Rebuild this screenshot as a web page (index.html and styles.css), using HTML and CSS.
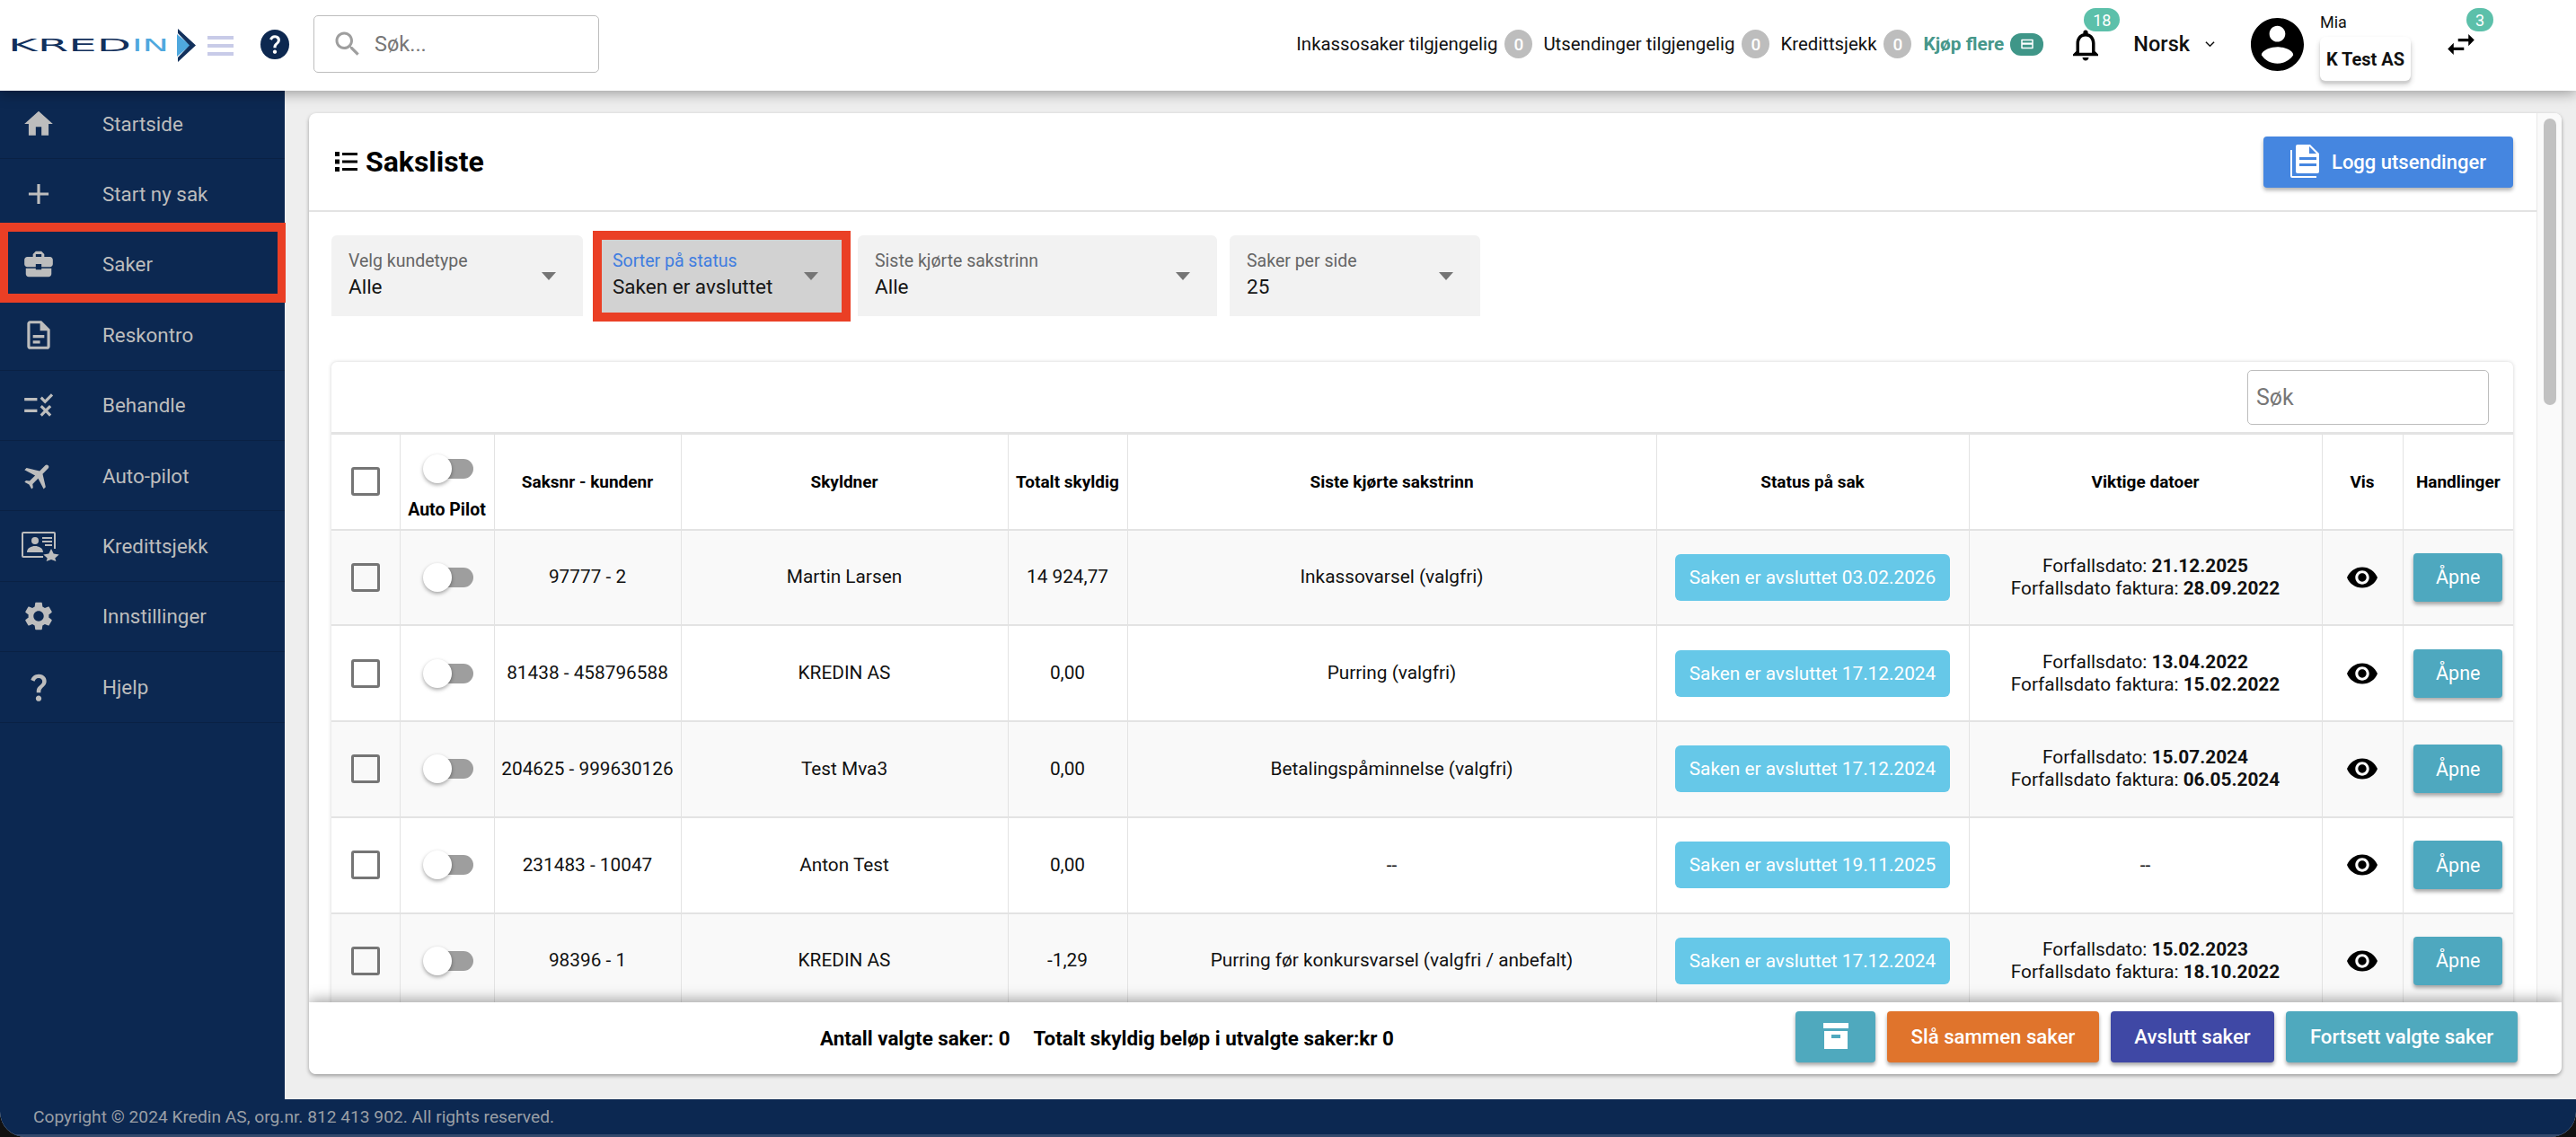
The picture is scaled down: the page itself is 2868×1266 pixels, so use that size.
FILE: index.html
```html
<!DOCTYPE html>
<html lang="no">
<head>
<meta charset="utf-8">
<title>Saksliste</title>
<link rel="stylesheet" href="styles.css">
</head>
<body>
<div class="app">
  <header class="topbar">
    <div class="brand">
      <svg class="logo" viewBox="0 0 206 37" aria-label="Kredin">
        <text x="-3" y="25" class="logo-a" textLength="137" lengthAdjust="spacingAndGlyphs">KRED</text>
        <text x="135" y="25" class="logo-b" textLength="41" lengthAdjust="spacingAndGlyphs">IN</text>
        <path fill="#4fa8de" d="M185 6l15 12.500-15 12.500z"/>
        <path fill="#12305c" d="M186 0l20 18.500-20 18.500v-5l13-13.500-13-13.500z"/>
      </svg>
      <div class="burger"><i></i><i></i><i></i></div>
      <div class="help-dot">
        <svg viewBox="0 0 24 24"><path fill="#fff" d="M11.07 12.85c.77-1.39 2.25-2.21 3.11-3.44.91-1.29.4-3.7-2.18-3.7-1.69 0-2.52 1.28-2.87 2.34L6.54 6.96C7.25 4.83 9.18 3 11.99 3c2.35 0 3.96 1.07 4.78 2.41.7 1.15 1.11 3.3.03 4.9-1.2 1.77-2.35 2.31-2.97 3.45-.25.46-.35.76-.35 2.24h-2.89c-.01-.78-.13-2.05.48-3.15zM14 20c0 1.1-.9 2-2 2s-2-.9-2-2 .9-2 2-2 2 .9 2 2z"/></svg>
      </div>
      <div class="top-search">
        <svg viewBox="0 0 24 24"><path fill="#9e9e9e" d="M15.5 14h-.79l-.28-.27C15.41 12.59 16 11.11 16 9.5 16 5.91 13.09 3 9.5 3S3 5.91 3 9.5 5.91 16 9.5 16c1.61 0 3.09-.59 4.23-1.57l.27.28v.79l5 4.99L20.49 19l-4.99-5zm-6 0C7.01 14 5 11.99 5 9.5S7.01 5 9.5 5 14 7.01 14 9.5 11.99 14 9.5 14z"/></svg>
        <span>Søk...</span>
      </div>
    </div>
    <div class="top-right">
      <span class="quota">Inkassosaker tilgjengelig</span><span class="zero">0</span>
      <span class="quota q2">Utsendinger tilgjengelig</span><span class="zero">0</span>
      <span class="quota q2">Kredittsjekk</span><span class="zero">0</span>
      <span class="buy">Kjøp flere</span>
      <span class="buy-pill"><svg viewBox="0 0 24 24"><path fill="#fff" d="M4 5h16a1 1 0 0 1 1 1v12a1 1 0 0 1-1 1H4a1 1 0 0 1-1-1V6a1 1 0 0 1 1-1zm1 2v3h14V7zm0 6v4h14v-4z"/></svg></span>
      <div class="bell">
        <svg viewBox="0 0 24 24"><path d="M12 22c1.1 0 2-.9 2-2h-4c0 1.1.9 2 2 2zm6-6v-5c0-3.07-1.63-5.64-4.5-6.32V4c0-.83-.67-1.5-1.5-1.5s-1.5.67-1.5 1.5v.68C7.64 5.36 6 7.92 6 11v5l-2 2v1h16v-1l-2-2zm-2 1H8v-6c0-2.48 1.51-4.5 4-4.5s4 2.02 4 4.5v6z"/></svg>
        <span class="pip pip-wide">18</span>
      </div>
      <div class="lang">Norsk<svg viewBox="0 0 12 8"><path fill="none" stroke="#111" stroke-width="1.6" d="M1 1.5l5 5 5-5"/></svg></div>
      <svg class="avatar" viewBox="2 2 20 20"><path d="M12 2C6.48 2 2 6.48 2 12s4.48 10 10 10 10-4.48 10-10S17.52 2 12 2zm0 3c1.66 0 3 1.34 3 3s-1.34 3-3 3-3-1.34-3-3 1.34-3 3-3zm0 14.2c-2.5 0-4.71-1.28-6-3.22.03-1.99 4-3.08 6-3.08 1.99 0 5.97 1.09 6 3.08-1.29 1.94-3.5 3.22-6 3.22z"/></svg>
      <div class="who">
        <span class="who-name">Mia</span>
        <span class="who-co">K Test AS</span>
      </div>
      <div class="swap">
        <svg viewBox="3 5 18 14"><path d="M6.99 11L3 15l3.99 4v-3H14v-2H6.99v-3zM21 9l-3.99-4v3H10v2h7.01v3L21 9z"/></svg>
        <span class="pip pip-narrow">3</span>
      </div>
    </div>
  </header>

  <div class="middle">
    <nav class="sidebar">
      <a class="nav-item"><svg viewBox="0 0 24 24"><path d="M10 20v-6h4v6h5v-8h3L12 3 2 12h3v8z"/></svg><span>Startside</span></a>
      <a class="nav-item"><svg viewBox="0 0 24 24"><path d="M19 13h-6v6h-2v-6H5v-2h6V5h2v6h6v2z"/></svg><span>Start ny sak</span></a>
      <a class="nav-item nav-marked"><svg viewBox="0 0 24 24"><path d="M10 16v-1H3.01L3 19c0 1.11.89 2 2 2h14c1.11 0 2-.89 2-2v-4h-7v1h-4zm10-9h-4.01V5l-2-2h-4l-2 2v2H4c-1.1 0-2 .9-2 2v3c0 1.11.89 2 2 2h6v-2h4v2h6c1.1 0 2-.9 2-2V9c0-1.1-.9-2-2-2zm-6 0h-4V5h4v2z"/></svg><span>Saker</span></a>
      <a class="nav-item"><svg viewBox="0 0 24 24"><path d="M8 16h5v2H8zm0-4h8v2H8zm6-10H6c-1.1 0-2 .9-2 2v16c0 1.1.89 2 1.99 2H18c1.1 0 2-.9 2-2V8l-6-6zm4 18H6V4h7v5h5v11z"/></svg><span>Reskontro</span></a>
      <a class="nav-item"><svg viewBox="0 0 24 24"><path d="M16.54 11L13 7.46l1.41-1.41 2.12 2.12 4.24-4.24 1.41 1.41L16.54 11zM11 7H2v2h9V7zm10 6.41L19.59 12 17 14.59 14.41 12 13 13.41 15.59 16 13 18.59 14.41 20 17 17.41 19.59 20 21 18.59 18.41 16 21 13.41zM11 15H2v2h9v-2z"/></svg><span>Behandle</span></a>
      <a class="nav-item"><svg viewBox="0 0 24 24"><path transform="rotate(45 12 12)" d="M21 16v-2l-8-5V3.5c0-.83-.67-1.5-1.5-1.5S10 2.67 10 3.5V9l-8 5v2l8-2.5V19l-2 1.5V22l3.5-1 3.5 1v-1.5L13 19v-5.5l8 2.5z"/></svg><span>Auto-pilot</span></a>
      <a class="nav-item"><svg class="nav-wide" viewBox="0 0 42 34"><path fill-rule="evenodd" d="M2 1h34a2 2 0 0 1 2 2v17h-2V3H2v25h22v2H2a2 2 0 0 1-2-2V3a2 2 0 0 1 2-2z"/><circle cx="15" cy="11" r="4"/><path d="M6 24c0-5 5-7 9-7s9 2 9 7zM23 7h11v2H23zM23 11h11v2H23zM26 15h8v2h-8zM33 20l2.700 5.600 6 .8-4.400 4.200 1.100 3.400-5.400-2-5.400 2 1.100-3.400-4.400-4.200 6-.8z"/></svg><span>Kredittsjekk</span></a>
      <a class="nav-item"><svg viewBox="0 0 24 24"><path d="M19.14,12.94c0.04-0.3,0.06-0.61,0.06-0.94c0-0.32-0.02-0.64-0.07-0.94l2.03-1.58c0.18-0.14,0.23-0.41,0.12-0.61 l-1.92-3.32c-0.12-0.22-0.37-0.29-0.59-0.22l-2.39,0.96c-0.5-0.38-1.03-0.7-1.62-0.94L14.4,2.81c-0.04-0.24-0.24-0.41-0.48-0.41 h-3.84c-0.24,0-0.43,0.17-0.47,0.41L9.25,5.35C8.66,5.59,8.12,5.92,7.63,6.29L5.24,5.33c-0.22-0.08-0.47,0-0.59,0.22L2.74,8.87 C2.62,9.08,2.66,9.34,2.86,9.48l2.03,1.58C4.84,11.36,4.8,11.69,4.8,12s0.02,0.64,0.07,0.94l-2.03,1.58 c-0.18,0.14-0.23,0.41-0.12,0.61l1.92,3.32c0.12,0.22,0.37,0.29,0.59,0.22l2.39-0.96c0.5,0.38,1.03,0.7,1.62,0.94l0.36,2.54 c0.05,0.24,0.24,0.41,0.48,0.41h3.84c0.24,0,0.44-0.17,0.47-0.41l0.36-2.54c0.59-0.24,1.13-0.56,1.62-0.94l2.39,0.96 c0.22,0.08,0.47,0,0.59-0.22l1.92-3.32c0.12-0.22,0.07-0.47-0.12-0.61L19.14,12.94z M12,15.6c-1.98,0-3.6-1.62-3.6-3.6 s1.62-3.6,3.6-3.6s3.6,1.62,3.6,3.6S13.98,15.6,12,15.6z"/></svg><span>Innstillinger</span></a>
      <a class="nav-item"><svg viewBox="0 0 24 24"><path d="M11.07 12.85c.77-1.39 2.25-2.21 3.11-3.44.91-1.29.4-3.7-2.18-3.7-1.69 0-2.52 1.28-2.87 2.34L6.54 6.96C7.25 4.83 9.18 3 11.99 3c2.35 0 3.96 1.07 4.78 2.41.7 1.15 1.11 3.3.03 4.9-1.2 1.77-2.35 2.31-2.97 3.45-.25.46-.35.76-.35 2.24h-2.89c-.01-.78-.13-2.05.48-3.15zM14 20c0 1.1-.9 2-2 2s-2-.9-2-2 .9-2 2-2 2 .9 2 2z"/></svg><span>Hjelp</span></a>
    </nav>

    <main class="content">
      <section class="card">
        <div class="card-body">
          <div class="scroll-pane">
            <div class="title-row">
              <h1 class="page-title">
                <svg viewBox="0 0 25 24"><path d="M0 1h5v5H0zM8 2h17v3H8zM0 9.500h5v5H0zM8 10.500h17v3H8zM0 18h5v5H0zM8 19h17v3H8z"/></svg>
                Saksliste
              </h1>
              <button class="log-btn">
                <svg viewBox="0 0 32 38"><path fill="#fff" d="M0 6h2v29h27v2H2a2 2 0 0 1-2-2zM8 0h14l10 10v20a2 2 0 0 1-2 2H8a2 2 0 0 1-2-2V2a2 2 0 0 1 2-2z"/><path fill="#4586e0" d="M21 2v8h8zM10 14h19v3H10zM10 21h19v3H10z"/></svg>
                Logg utsendinger
              </button>
            </div>
            <div class="filters">
              <div class="select s-a"><span class="sel-label">Velg kundetype</span><span class="sel-value">Alle</span><i class="caret"></i></div>
              <div class="select s-b sel-on"><span class="sel-label">Sorter på status</span><span class="sel-value">Saken er avsluttet</span><i class="caret"></i></div>
              <div class="select s-c"><span class="sel-label">Siste kjørte sakstrinn</span><span class="sel-value">Alle</span><i class="caret"></i></div>
              <div class="select s-d"><span class="sel-label">Saker per side</span><span class="sel-value">25</span><i class="caret"></i></div>
            </div>
            <div class="table-card">
              <div class="table-tools"><div class="tbl-search">Søk</div></div>
              <table class="cases">
                <colgroup>
                  <col class="c1"><col class="c2"><col class="c3"><col class="c4"><col class="c5"><col class="c6"><col class="c7"><col class="c8"><col class="c9"><col class="c10">
                </colgroup>
                <thead>
                  <tr>
                    <th><i class="check"></i></th>
                    <th class="ap-head"><i class="toggle"></i><span class="ap-label">Auto Pilot</span></th>
                    <th>Saksnr - kundenr</th>
                    <th>Skyldner</th>
                    <th>Totalt skyldig</th>
                    <th>Siste kjørte sakstrinn</th>
                    <th>Status på sak</th>
                    <th>Viktige datoer</th>
                    <th>Vis</th>
                    <th>Handlinger</th>
                  </tr>
                </thead>
                <tbody>
                  <tr>
                    <td><i class="check"></i></td><td><i class="toggle"></i></td>
                    <td>97777 - 2</td><td>Martin Larsen</td><td>14 924,77</td><td>Inkassovarsel (valgfri)</td>
                    <td><span class="status">Saken er avsluttet 03.02.2026</span></td>
                    <td>Forfallsdato: <b>21.12.2025</b><br>Forfallsdato faktura: <b>28.09.2022</b></td>
                    <td><svg class="eye" viewBox="1 4.500 22 15"><path d="M12 4.500C7 4.500 2.730 7.610 1 12c1.730 4.390 6 7.500 11 7.500s9.270-3.110 11-7.500c-1.730-4.390-6-7.500-11-7.500zM12 17c-2.760 0-5-2.240-5-5s2.240-5 5-5 5 2.240 5 5-2.240 5-5 5zm0-8c-1.660 0-3 1.340-3 3s1.340 3 3 3 3-1.340 3-3-1.340-3-3-3z"/></svg></td>
                    <td><button class="open">Åpne</button></td>
                  </tr>
                  <tr>
                    <td><i class="check"></i></td><td><i class="toggle"></i></td>
                    <td>81438 - 458796588</td><td>KREDIN AS</td><td>0,00</td><td>Purring (valgfri)</td>
                    <td><span class="status">Saken er avsluttet 17.12.2024</span></td>
                    <td>Forfallsdato: <b>13.04.2022</b><br>Forfallsdato faktura: <b>15.02.2022</b></td>
                    <td><svg class="eye" viewBox="1 4.500 22 15"><path d="M12 4.500C7 4.500 2.730 7.610 1 12c1.730 4.390 6 7.500 11 7.500s9.270-3.110 11-7.500c-1.730-4.390-6-7.500-11-7.500zM12 17c-2.760 0-5-2.240-5-5s2.240-5 5-5 5 2.240 5 5-2.240 5-5 5zm0-8c-1.660 0-3 1.340-3 3s1.340 3 3 3 3-1.340 3-3-1.340-3-3-3z"/></svg></td>
                    <td><button class="open">Åpne</button></td>
                  </tr>
                  <tr>
                    <td><i class="check"></i></td><td><i class="toggle"></i></td>
                    <td>204625 - 999630126</td><td>Test Mva3</td><td>0,00</td><td>Betalingspåminnelse (valgfri)</td>
                    <td><span class="status">Saken er avsluttet 17.12.2024</span></td>
                    <td>Forfallsdato: <b>15.07.2024</b><br>Forfallsdato faktura: <b>06.05.2024</b></td>
                    <td><svg class="eye" viewBox="1 4.500 22 15"><path d="M12 4.500C7 4.500 2.730 7.610 1 12c1.730 4.390 6 7.500 11 7.500s9.270-3.110 11-7.500c-1.730-4.390-6-7.500-11-7.500zM12 17c-2.760 0-5-2.240-5-5s2.240-5 5-5 5 2.240 5 5-2.240 5-5 5zm0-8c-1.660 0-3 1.340-3 3s1.340 3 3 3 3-1.340 3-3-1.340-3-3-3z"/></svg></td>
                    <td><button class="open">Åpne</button></td>
                  </tr>
                  <tr>
                    <td><i class="check"></i></td><td><i class="toggle"></i></td>
                    <td>231483 - 10047</td><td>Anton Test</td><td>0,00</td><td>--</td>
                    <td><span class="status">Saken er avsluttet 19.11.2025</span></td>
                    <td>--</td>
                    <td><svg class="eye" viewBox="1 4.500 22 15"><path d="M12 4.500C7 4.500 2.730 7.610 1 12c1.730 4.390 6 7.500 11 7.500s9.270-3.110 11-7.500c-1.730-4.390-6-7.500-11-7.500zM12 17c-2.760 0-5-2.240-5-5s2.240-5 5-5 5 2.240 5 5-2.240 5-5 5zm0-8c-1.660 0-3 1.340-3 3s1.340 3 3 3 3-1.340 3-3-1.340-3-3-3z"/></svg></td>
                    <td><button class="open">Åpne</button></td>
                  </tr>
                  <tr>
                    <td><i class="check"></i></td><td><i class="toggle"></i></td>
                    <td>98396 - 1</td><td>KREDIN AS</td><td>-1,29</td><td>Purring før konkursvarsel (valgfri / anbefalt)</td>
                    <td><span class="status">Saken er avsluttet 17.12.2024</span></td>
                    <td>Forfallsdato: <b>15.02.2023</b><br>Forfallsdato faktura: <b>18.10.2022</b></td>
                    <td><svg class="eye" viewBox="1 4.500 22 15"><path d="M12 4.500C7 4.500 2.730 7.610 1 12c1.730 4.390 6 7.500 11 7.500s9.270-3.110 11-7.500c-1.730-4.390-6-7.500-11-7.500zM12 17c-2.760 0-5-2.240-5-5s2.240-5 5-5 5 2.240 5 5-2.240 5-5 5zm0-8c-1.660 0-3 1.340-3 3s1.340 3 3 3 3-1.340 3-3-1.340-3-3-3z"/></svg></td>
                    <td><button class="open">Åpne</button></td>
                  </tr>
                </tbody>
              </table>
            </div>
          </div>
          <div class="scrollbar"><i></i></div>
        </div>
        <div class="action-bar">
          <div class="totals"><span>Antall valgte saker: 0</span><span>Totalt skyldig beløp i utvalgte saker:kr 0</span></div>
          <div class="actions">
            <button class="act act-archive"><svg viewBox="0 0 28 30"><path fill="#fff" fill-rule="evenodd" d="M0 0h28v6H0zM1 9h26v20H1zM9 13v4h10v-4z"/></svg></button>
            <button class="act act-merge">Slå sammen saker</button>
            <button class="act act-end">Avslutt saker</button>
            <button class="act act-go">Fortsett valgte saker</button>
          </div>
        </div>
      </section>
    </main>
  </div>

  <footer class="copyright">Copyright © 2024 Kredin AS, org.nr. 812 413 902. All rights reserved.</footer>
</div>
</body>
</html>
```
FILE: styles.css
```css
*, *::before, *::after { box-sizing: border-box; }
html, body { margin: 0; height: 100%; background: #111; }
body { font-family: Roboto, "Liberation Sans", sans-serif; overflow: hidden; color: #111; }
button { font-family: inherit; border: 0; cursor: pointer; }

.app { width: 2868px; height: 1266px; display: flex; flex-direction: column; background: #eee; overflow: hidden; border-radius: 0 0 28px 28px; }

/* top bar */
.topbar { height: 101px; flex: none; background: #fff; display: flex; justify-content: space-between; position: relative; z-index: 3; box-shadow: 0 3px 14px rgba(0,0,0,.35); }
.brand { display: flex; align-items: center; padding-left: 12px; }
.logo { width: 206px; height: 37px; margin-top: -1px; overflow: visible; }
.logo-a, .logo-b { font-family: "DejaVu Sans", sans-serif; font-size: 20px; font-weight: 400; }
.logo-a { fill: #12305c; }
.logo-b { fill: #4fa8de; }
.burger { width: 29px; margin-left: 13px; display: flex; flex-direction: column; gap: 5px; }
.burger i { display: block; height: 4px; background: #c8cbe8; }
.help-dot { width: 32px; height: 33px; margin-left: 30px; margin-bottom: 3px; border-radius: 50%; background: #0d2850; display: flex; align-items: center; justify-content: center; }
.help-dot svg { width: 26px; height: 26px; }
.top-search { width: 318px; height: 64px; margin-left: 27px; margin-bottom: 3px; border: 1px solid #bdbdbd; border-radius: 5px; display: flex; align-items: center; padding-left: 19px; gap: 12px; font-size: 23.500px; color: #777; }
.top-search svg { width: 36px; height: 36px; }

.top-right { display: flex; align-items: center; position: relative; padding: 0 113px 3px 0; }
.quota { font-size: 20.400px; color: #111; margin-right: 8px; }
.q2 { margin-left: 12px; }
.zero { width: 31px; height: 32px; border-radius: 50%; background: #bdbdbd; color: #fff; font-size: 19px; font-weight: 500; display: flex; align-items: center; justify-content: center; }
.buy { margin-left: 13px; font-size: 20.800px; font-weight: 700; color: #46978a; }
.buy-pill { width: 37px; height: 25px; margin-left: 7px; border-radius: 12px; background: #3f9688; display: flex; align-items: center; justify-content: center; }
.buy-pill svg { width: 22px; height: 18px; }
.bell { width: 38px; height: 44px; margin: 4px 0 0 28px; position: relative; }
.bell svg { width: 42px; height: 42px; margin-left: -2px; display: block; }
.pip { position: absolute; background: #5cc0aa; color: #fff; font-size: 18px; display: flex; align-items: center; justify-content: center; border-radius: 13px; height: 26px; }
.pip-wide { width: 40px; left: 17px; top: -20px; }
.pip-narrow { width: 30px; left: 21px; top: -29px; }
.lang { margin-left: 34px; font-size: 23.500px; font-weight: 500; display: flex; align-items: center; gap: 17px; }
.lang svg { width: 11px; height: 8px; }
.avatar { width: 59px; height: 59px; margin-left: 40px; }
.who { margin-left: 18px; width: 101px; display: flex; flex-direction: column; align-self: flex-start; padding-top: 15px; }
.who-name { font-size: 18px; height: 26px; line-height: 20px; }
.who-co { height: 49px; background: #fff; border-radius: 6px; box-shadow: 0 3px 2px #cfcfcf, 0 4px 6px rgba(0,0,0,.2); font-size: 20px; font-weight: 700; display: flex; align-items: center; justify-content: center; }
.swap { width: 30px; height: 22px; margin-left: 41px; position: relative; }
.swap svg { width: 30px; height: 23px; display: block; }

/* middle */
.middle { flex: 1; min-height: 0; display: flex; }
.sidebar { width: 317px; flex: none; background: #0c2851; }
.nav-item { height: 78.400px; padding-left: 24px; display: flex; align-items: center; gap: 52px; border-bottom: 1px solid #0a2144; color: #bdbdbd; font-size: 22.400px; position: relative; }
.nav-item:first-child { margin-top: -2px; }
.nav-item svg { width: 38px; height: 38px; flex: none; fill: #bdbdbd; }
.nav-item svg.nav-wide { width: 42px; height: 34px; margin-right: -4px; }
.nav-marked::after { content: ""; position: absolute; left: 0; top: -8px; width: 318px; height: 89px; border: solid #ea3f25; border-width: 10px 9px; }

.content { flex: 1; min-width: 0; padding: 25px 16px 28px 27px; }
.card { height: 100%; background: #fff; border-radius: 8px; box-shadow: 0 2px 4px rgba(0,0,0,.35); display: flex; flex-direction: column; overflow: hidden; }
.card-body { flex: 1; min-height: 0; display: flex; }
.scroll-pane { flex: 1; min-width: 0; overflow: hidden; }
.scrollbar { width: 28px; flex: none; background: #fafafa; border-left: 1px solid #e8e8e8; padding: 6px 6px 0 7px; }
.scrollbar i { display: block; height: 319px; border-radius: 8px; background: #c1c1c1; }

.title-row { height: 110px; border-bottom: 2px solid #e3e3e3; display: flex; align-items: center; justify-content: space-between; padding: 0 26px 0 29px; }
.page-title { margin: 0; font-size: 32px; font-weight: 700; color: #000; display: flex; align-items: center; gap: 9px; }
.page-title svg { width: 25px; height: 24px; }
.log-btn { width: 278px; height: 57px; background: #4586e0; color: #fff; border-radius: 4px; font-size: 22px; font-weight: 500; display: flex; align-items: center; justify-content: center; gap: 14px; box-shadow: 0 3px 4px rgba(0,0,0,.3); }
.log-btn svg { width: 32px; height: 38px; }

.filters { display: flex; padding: 26px 0 0 25px; gap: 14px; }
.select { height: 90px; background: #f2f2f2; border-radius: 6px 6px 0 0; position: relative; padding: 17px 0 0 19px; display: flex; flex-direction: column; }
.s-a { width: 280px; }
.s-b { width: 278px; }
.s-c { width: 400px; }
.s-d { width: 279px; }
.sel-label { font-size: 19.500px; line-height: 24px; color: #666; }
.sel-value { font-size: 22.500px; line-height: 32px; margin-top: 0; color: #151515; }
.caret { position: absolute; right: 30px; top: 41px; border: solid transparent; border-width: 9px 8px 0; border-top-color: #757575; }
.sel-on { background: #d2d2d2; }
.sel-on .sel-label { color: #3f7de0; }
.sel-on::after { content: ""; position: absolute; left: -3px; top: -5px; width: 287px; height: 101px; border: 10px solid #ea3f25; }

.table-card { margin: 51px 0 0 25px; width: 2429px; background: #fff; border-radius: 6px 6px 0 0; box-shadow: 0 0 4px rgba(0,0,0,.18); }
.table-tools { height: 80px; padding: 9px 27px 0 0; display: flex; justify-content: flex-end; border-bottom: 2px solid #e3e3e3; }
.tbl-search { width: 269px; height: 61px; border: 1px solid #bdbdbd; border-radius: 5px; padding: 0 9px; font-size: 25px; line-height: 59px; color: #777; }

.cases { width: 2429px; table-layout: fixed; border-collapse: collapse; font-size: 20.800px; color: #111; }
.c1 { width: 76px; } .c2 { width: 105px; } .c3 { width: 208px; } .c4 { width: 364px; } .c5 { width: 133px; }
.c6 { width: 589px; } .c7 { width: 348px; } .c8 { width: 393px; } .c9 { width: 90px; } .c10 { width: 123px; }
.cases th, .cases td { border: 1px solid #e3e3e3; text-align: center; vertical-align: middle; padding: 0; }
.cases tr > :first-child { border-left: 0; }
.cases tr > :last-child { border-right: 0; }
.cases th { height: 106px; font-size: 19px; font-weight: 700; color: #000; border-bottom: 2px solid #e3e3e3; }
.cases td { height: 106.750px; line-height: 25px; border-bottom: 2px solid #e3e3e3; }
.cases tbody tr:nth-child(odd) { background: #f9f9f9; }
.ap-head { position: relative; }
.ap-label { position: absolute; left: 0; right: 0; top: 72px; font-size: 19.500px; }
.ap-head .toggle { position: absolute; left: 30px; top: 27px; margin: 0; }
.check { display: block; width: 32px; height: 32px; margin: 0 auto 0 22px; border: 3px solid #757575; border-radius: 3px; background: transparent; }
.toggle { display: block; position: relative; width: 51px; height: 22px; margin-left: 30px; border-radius: 11px; background: #9e9e9e; }
.toggle::before { content: ""; position: absolute; left: -5px; top: -5px; width: 32px; height: 32px; border-radius: 50%; background: #fff; box-shadow: 0 2px 4px rgba(0,0,0,.35); }
.status { display: block; width: 306px; height: 52px; margin: 0 auto; background: #66c8e8; border-radius: 6px; color: #fff; font-size: 20.800px; line-height: 52px; }
.eye { width: 34px; height: 24px; display: block; margin: 0 auto; }
.open { display: block; width: 99px; height: 54px; margin: 0 auto; background: #4ea8bf; color: #fff; border-radius: 4px; font-size: 21.500px; box-shadow: 0 3px 4px rgba(0,0,0,.35); }

.action-bar { height: 80px; flex: none; background: #fff; display: flex; align-items: center; position: relative; box-shadow: 0 -3px 14px rgba(0,0,0,.35); }
.totals { position: absolute; left: 569px; font-size: 22.400px; font-weight: 700; color: #000; display: flex; gap: 26px; }
.actions { margin-left: auto; margin-right: 49px; display: flex; gap: 13px; margin-top: -4px; }
.act { height: 57px; border-radius: 4px; color: #fff; font-size: 22.200px; font-weight: 500; display: flex; align-items: center; justify-content: center; box-shadow: 0 3px 4px rgba(0,0,0,.35); }
.act svg { width: 28px; height: 30px; }
.act-archive { width: 89px; background: #4fa9be; }
.act-merge { width: 236px; background: #e0742c; }
.act-end { width: 182px; background: #3f48a5; }
.act-go { width: 258px; background: #4fa9be; }

.copyright { height: 42px; flex: none; background: #0c2851; color: #9a9fa6; font-size: 19.200px; padding-left: 37px; display: flex; align-items: center; border-bottom: 3px solid #33496c; }
```
